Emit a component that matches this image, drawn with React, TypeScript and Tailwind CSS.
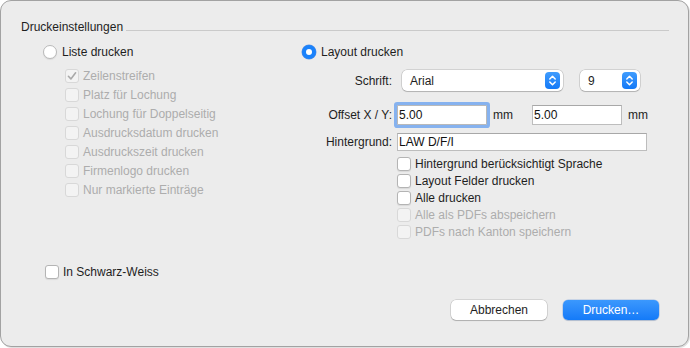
import React from "react";

const font = { fontFamily: '"Liberation Sans", Arial, sans-serif' };

function Check() {
  return (
    <svg width="12" height="12" viewBox="0 0 12 12" fill="none">
      <path d="M2.4 6.3 L4.9 8.9 L9.6 2.8" stroke="#a9a9a9" strokeWidth="1.6" strokeLinecap="round" strokeLinejoin="round" />
    </svg>
  );
}

function Checkbox({ label, checked = false, disabled = false }: { label: string; checked?: boolean; disabled?: boolean }) {
  return (
    <div className="flex items-center gap-[4px]">
      <span
        className={
          disabled
            ? "w-[14px] h-[14px] rounded-[3px] flex items-center justify-center bg-[#f3f3f3] border border-[#d8d8d8]"
            : "w-[14px] h-[14px] rounded-[3px] flex items-center justify-center bg-white border border-[#b4b4b4] shadow-[0_1px_1px_rgba(0,0,0,0.08)]"
        }
      >
        {checked && <Check />}
      </span>
      <span className={disabled ? "text-[#adadad]" : "text-[#1e1e1e]"}>{label}</span>
    </div>
  );
}

function Radio({ label, checked = false }: { label: string; checked?: boolean }) {
  return (
    <div className="flex items-center gap-[5px] h-[14px]">
      {checked ? (
        <span className="w-[14px] h-[14px] rounded-full bg-[#1b82fb] flex items-center justify-center shadow-[0_0_0_0.5px_rgba(0,90,220,0.6)]">
          <span className="w-[6px] h-[6px] rounded-full bg-white" />
        </span>
      ) : (
        <span className="w-[14px] h-[14px] rounded-full bg-white border border-[#b9b9b9] shadow-[0_1px_1px_rgba(0,0,0,0.08)]" />
      )}
      <span className="text-[#1e1e1e]">{label}</span>
    </div>
  );
}

function Stepper() {
  return (
    <span className="w-[15px] h-[17px] rounded-[4px] bg-gradient-to-b from-[#3f9cfd] to-[#1279f7] flex items-center justify-center">
      <svg width="15" height="17" viewBox="0 0 15 17" fill="none">
        <path d="M4.8 7 L7.5 4.3 L10.2 7" stroke="white" strokeWidth="1.5" strokeLinecap="round" strokeLinejoin="round" />
        <path d="M4.8 10 L7.5 12.7 L10.2 10" stroke="white" strokeWidth="1.5" strokeLinecap="round" strokeLinejoin="round" />
      </svg>
    </span>
  );
}

export default function App() {
  return (
    <div className="w-[690px] h-[348px] bg-white text-[12px] leading-[14px] antialiased" style={font}>
      <div className="w-[689px] h-[347px] rounded-[11px] border border-[#a2a2a2] bg-[#ececec] shadow-[1px_1px_0_rgba(0,0,0,0.12)] flex flex-col pl-[20px] pr-[19px] pt-[19px]">
        {/* header */}
        <div className="flex items-end h-[14px]">
          <span className="text-[#1e1e1e]">Druckeinstellungen</span>
          <div className="flex-1 h-px bg-[#cacaca] ml-[3px] mb-[3px]" />
        </div>

        {/* columns */}
        <div className="flex mt-[11px] ml-[22px]">
          {/* left */}
          <div className="w-[259px] flex flex-col">
            <Radio label="Liste drucken" />
            <div className="flex flex-col mt-[7px] pl-[22px]">
              {[
                { l: "Zeilenstreifen", c: true },
                { l: "Platz für Lochung" },
                { l: "Lochung für Doppelseitig" },
                { l: "Ausdrucksdatum drucken" },
                { l: "Ausdruckszeit drucken" },
                { l: "Firmenlogo drucken" },
                { l: "Nur markierte Einträge" },
              ].map((r) => (
                <div key={r.l} className="h-[19px] flex items-center">
                  <Checkbox label={r.l} checked={!!r.c} disabled />
                </div>
              ))}
            </div>
          </div>

          {/* right */}
          <div className="flex flex-col">
            <Radio label="Layout drucken" checked />

            <div className="flex items-center h-[21px] mt-[11px]">
              <span className="w-[90px] text-right text-[#1e1e1e]">Schrift:</span>
              <div className="ml-[10px] w-[161px] h-[21px] rounded-[5px] bg-white shadow-[0_0_0_0.5px_rgba(0,0,0,0.22),0_1px_1px_rgba(0,0,0,0.15)] flex items-center justify-between pl-[8px] pr-[3px]">
                <span className="text-[#1e1e1e]">Arial</span>
                <Stepper />
              </div>
              <div className="ml-[17px] w-[60px] h-[21px] rounded-[5px] bg-white shadow-[0_0_0_0.5px_rgba(0,0,0,0.22),0_1px_1px_rgba(0,0,0,0.15)] flex items-center justify-between pl-[8px] pr-[3px]">
                <span className="text-[#1e1e1e]">9</span>
                <Stepper />
              </div>
            </div>

            <div className="flex items-center h-[22px] mt-[13px]">
              <span className="w-[90px] text-right text-[#1e1e1e]">Offset X / Y:</span>
              <div className="ml-[5px] w-[90px] h-[20px] bg-white border border-[#b9b9b9] rounded-[1px] shadow-[0_0_0_3px_#86b2ef] flex items-center pl-[1px] text-[#111]">
                5.00
              </div>
              <span className="ml-[6px] w-[39px] text-[#1e1e1e]">mm</span>
              <div className="w-[90px] h-[20px] bg-white border border-[#bdbdbd] border-t-[#a8a8a8] flex items-center pl-[1px] text-[#111]">
                5.00
              </div>
              <span className="ml-[6px] text-[#1e1e1e]">mm</span>
            </div>

            <div className="flex items-center h-[20px] mt-[6px]">
              <span className="w-[90px] text-right text-[#1e1e1e]">Hintergrund:</span>
              <div className="ml-[5px] w-[250px] h-[18px] bg-white border border-[#bdbdbd] border-t-[#a8a8a8] flex items-center pl-[1px] text-[#111]">
                LAW D/F/I
              </div>
            </div>

            <div className="flex flex-col mt-[3px] pl-[95px]">
              <div className="h-[17px] flex items-center"><Checkbox label="Hintergrund berücksichtigt Sprache" /></div>
              <div className="h-[17px] flex items-center"><Checkbox label="Layout Felder drucken" /></div>
              <div className="h-[17px] flex items-center"><Checkbox label="Alle drucken" /></div>
              <div className="h-[17px] flex items-center"><Checkbox label="Alle als PDFs abspeichern" disabled /></div>
              <div className="h-[17px] flex items-center"><Checkbox label="PDFs nach Kanton speichern" disabled /></div>
            </div>
          </div>
        </div>

        {/* schwarz-weiss */}
        <div className="h-[14px] flex items-center mt-[25px] pl-[24px]">
          <Checkbox label="In Schwarz-Weiss" />
        </div>

        {/* buttons */}
        <div className="flex justify-end gap-[16px] mt-[21px] mr-[10px]">
          <button className="w-[96px] h-[20px] rounded-[5px] bg-white text-[#1e1e1e] shadow-[0_0_0_0.5px_rgba(0,0,0,0.2),0_1px_1px_rgba(0,0,0,0.18)] flex items-center justify-center">
            Abbrechen
          </button>
          <button className="w-[96px] h-[20px] rounded-[5px] bg-gradient-to-b from-[#3b98fd] to-[#137af8] text-white shadow-[0_0_0_0.5px_rgba(0,80,200,0.3),0_1px_1px_rgba(0,0,0,0.12)] flex items-center justify-center">
            Drucken…
          </button>
        </div>
      </div>
    </div>
  );
}
